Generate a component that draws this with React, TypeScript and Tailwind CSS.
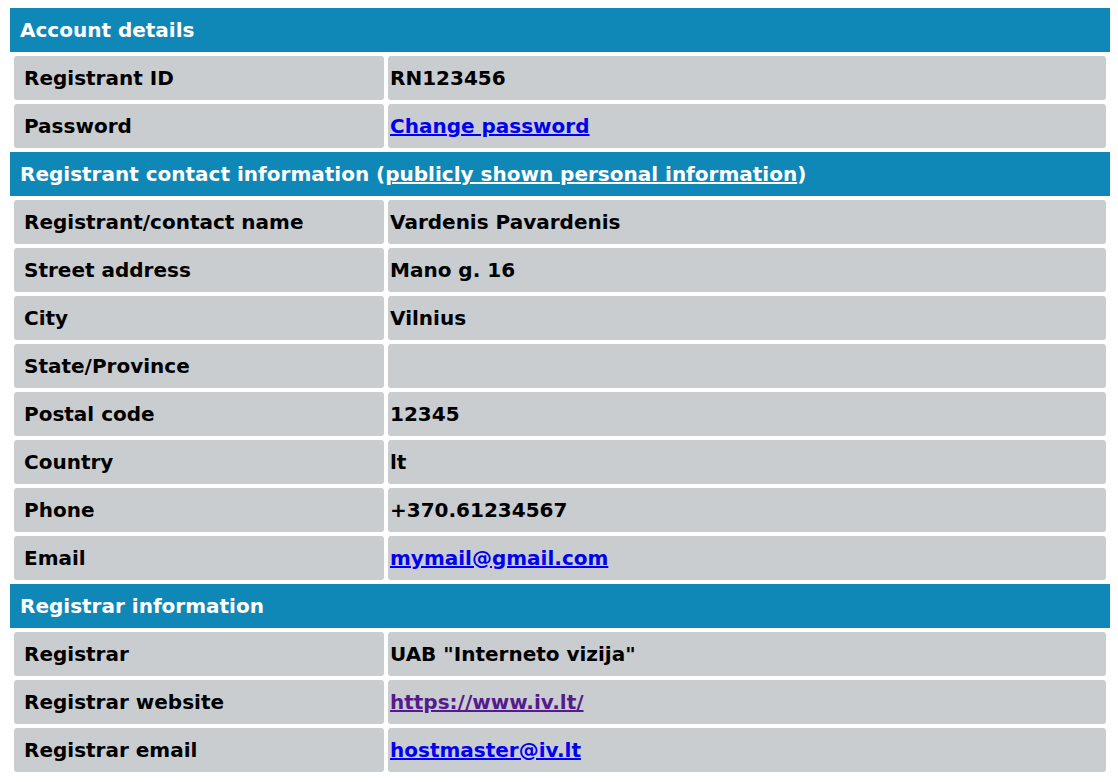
const sections: { title: React.ReactNode; rows: [string, React.ReactNode][] }[] = [
  {
    title: 'Account details',
    rows: [
      ['Registrant ID', 'RN123456'],
      ['Password', <a href="#" className="text-[#0000ee] underline">Change password</a>],
    ],
  },
  {
    title: (
      <>
        Registrant contact information (<a href="#" className="underline">publicly shown personal information</a>)
      </>
    ),
    rows: [
      ['Registrant/contact name', 'Vardenis Pavardenis'],
      ['Street address', 'Mano g. 16'],
      ['City', 'Vilnius'],
      ['State/Province', ''],
      ['Postal code', '12345'],
      ['Country', 'lt'],
      ['Phone', '+370.61234567'],
      ['Email', <a href="#" className="text-[#0000ee] underline">mymail@gmail.com</a>],
    ],
  },
  {
    title: 'Registrar information',
    rows: [
      ['Registrar', 'UAB "Interneto vizija"'],
      ['Registrar website', <a href="#" className="text-[#551a8b] underline">https://www.iv.lt/</a>],
      ['Registrar email', <a href="#" className="text-[#0000ee] underline">hostmaster@iv.lt</a>],
    ],
  },
];

function App() {
  return (
    <div className="bg-white min-h-screen pt-2 px-[10px] font-['DejaVu_Sans',Verdana,sans-serif] font-bold text-[20px] leading-[24px] text-black">
      <div className="w-[1100px] flex flex-col gap-1">
        {sections.map((s, i) => (
          <div key={i} className="flex flex-col gap-1">
            <div className="h-[44px] bg-[#0f88b8] text-white flex items-center px-[10px] whitespace-nowrap">{s.title}</div>
            {s.rows.map(([label, value]) => (
              <div key={label} className="flex gap-1 px-1">
                <div className="w-[370px] h-[44px] bg-[#c9cdd0] rounded-[3px] flex items-center px-[10px] whitespace-nowrap">{label}</div>
                <div className="flex-1 h-[44px] bg-[#c9cdd0] rounded-[3px] flex items-center px-[2px] whitespace-nowrap">{value}</div>
              </div>
            ))}
          </div>
        ))}
      </div>
    </div>
  );
}

export default App;
